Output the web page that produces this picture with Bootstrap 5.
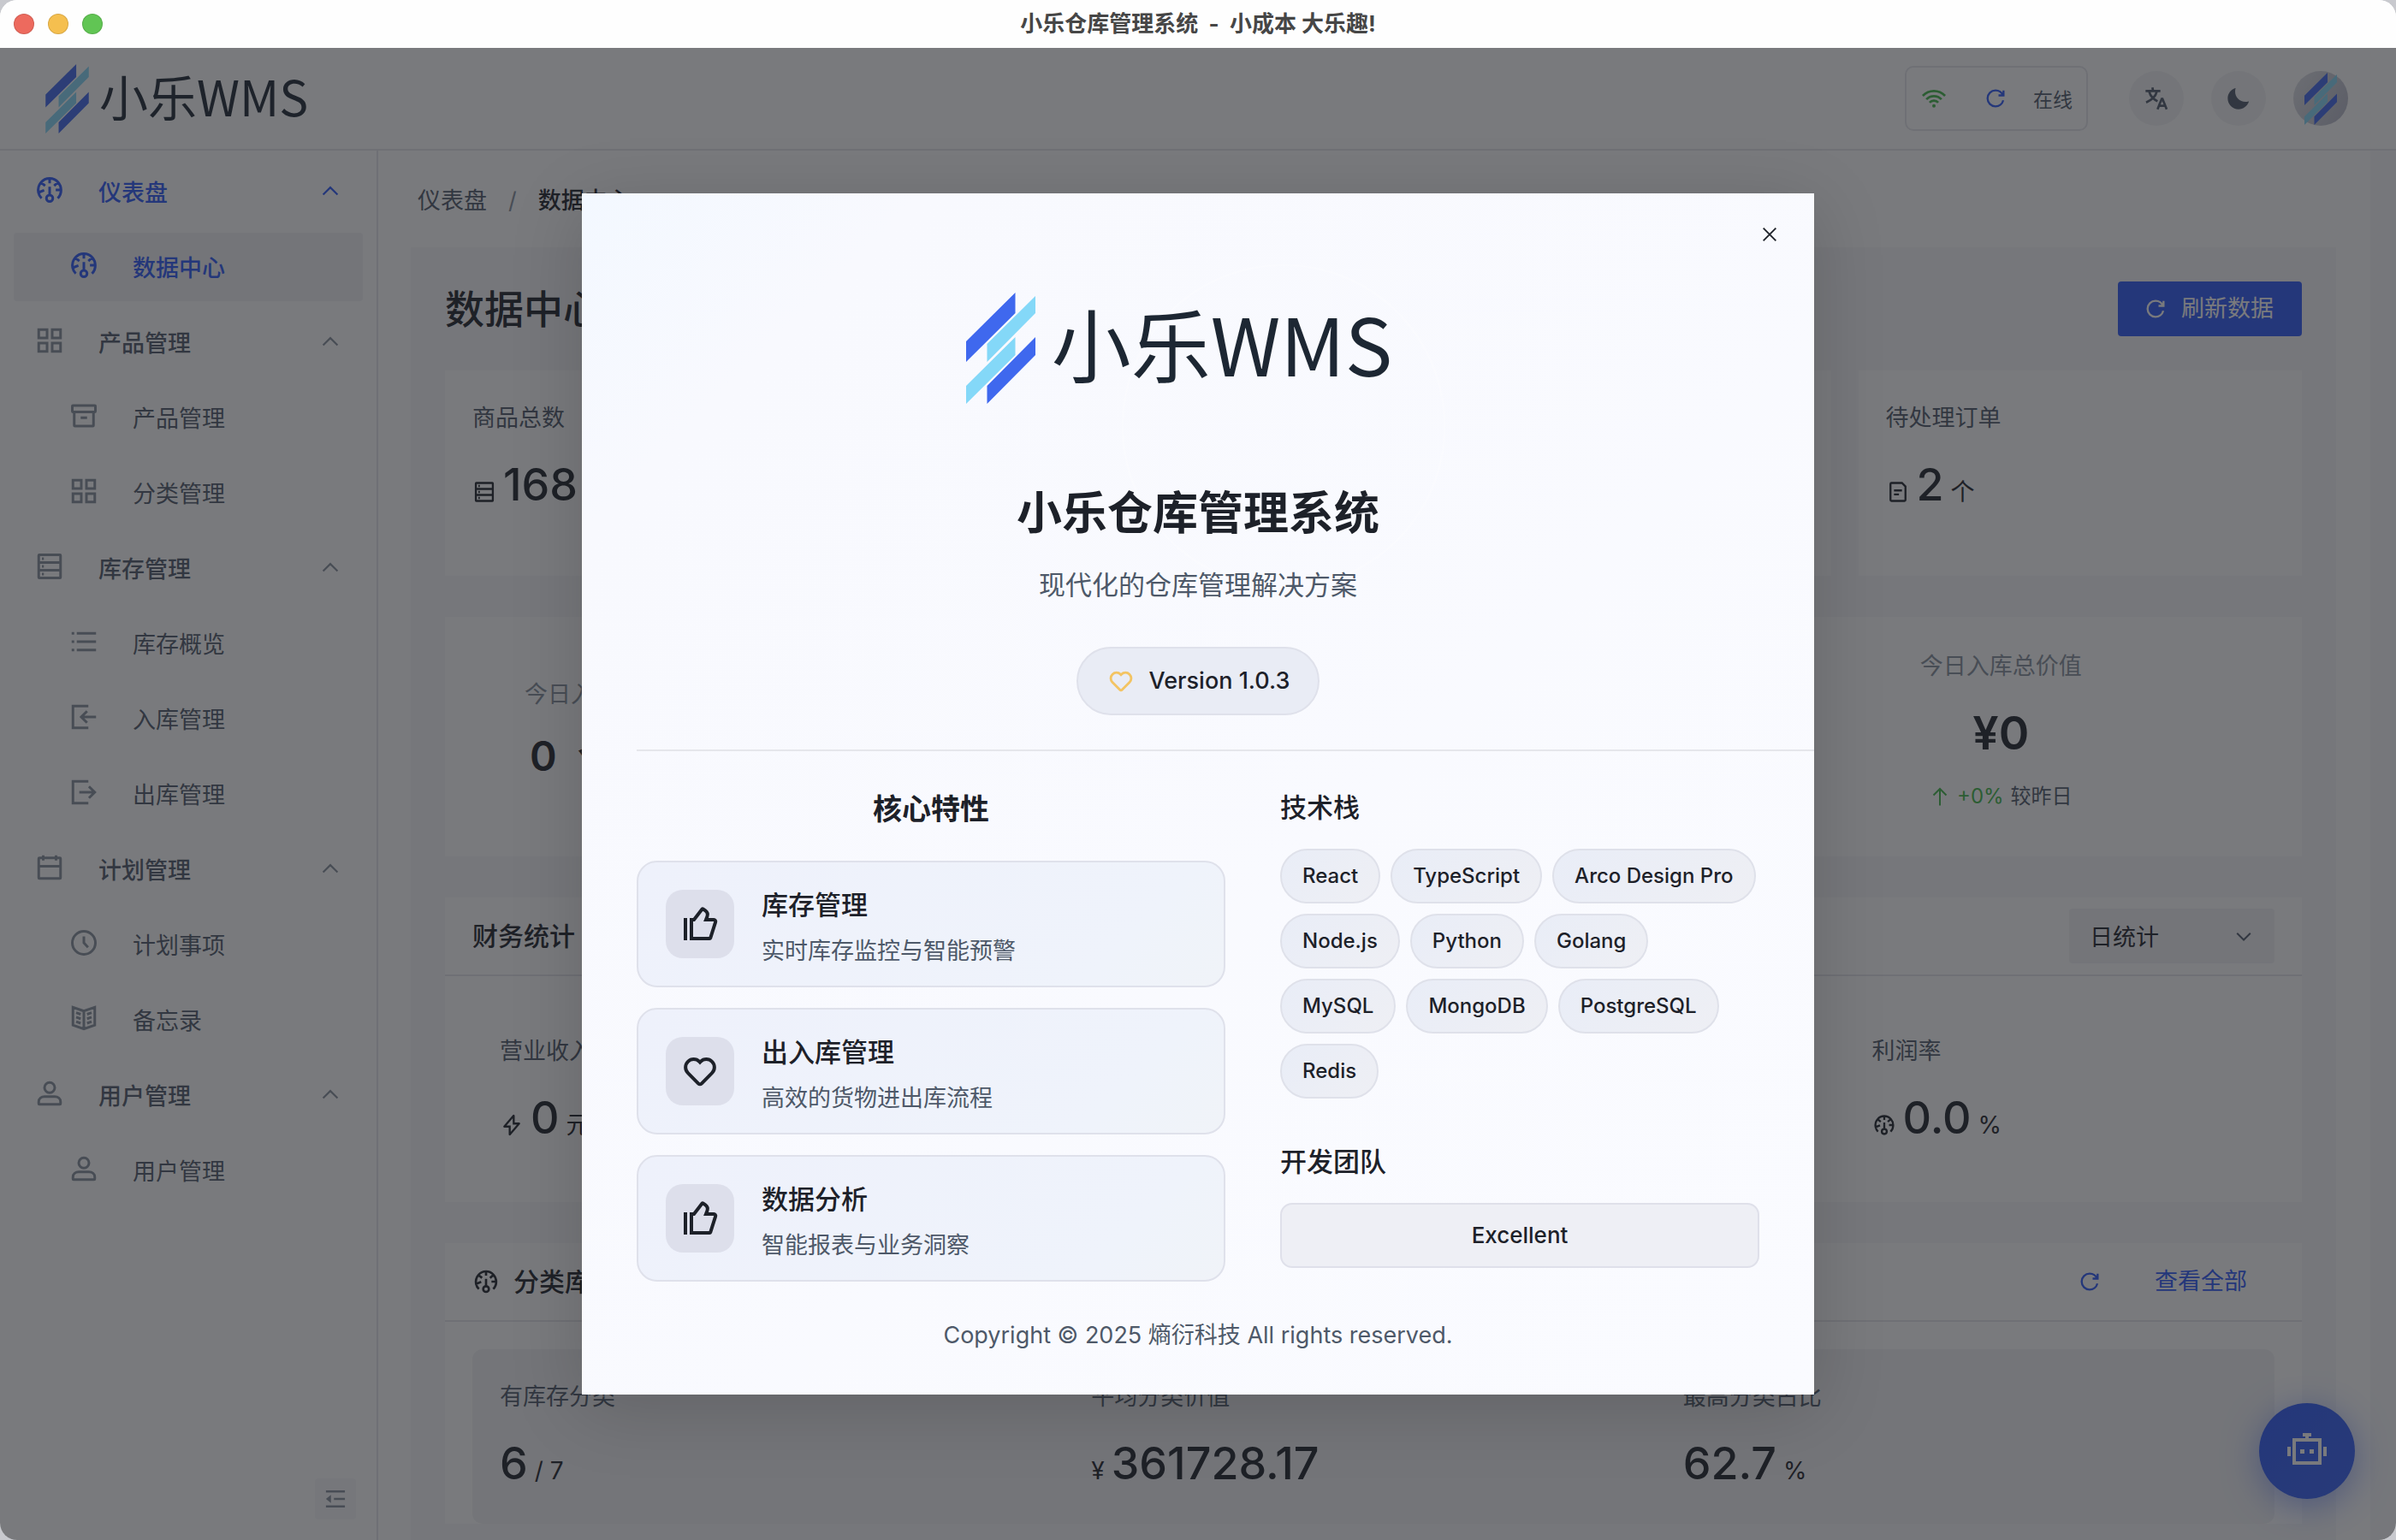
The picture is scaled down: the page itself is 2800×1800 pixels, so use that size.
<!DOCTYPE html>
<html lang="zh-CN">
<head>
<meta charset="utf-8">
<meta name="viewport" content="width=device-width, initial-scale=1">
<title>小乐仓库管理系统</title>
<link href="https://cdn.jsdelivr.net/npm/bootstrap@5.3.0/dist/css/bootstrap.min.css" rel="stylesheet">
<script src="https://cdn.jsdelivr.net/npm/bootstrap@5.3.0/dist/js/bootstrap.bundle.min.js"></script>
<style>
  :root {
    --ink: #1d2129; --ink-2: #4e5969; --ink-3: #86909c; --line: #e5e6eb;
    --fill: #f7f8fa; --fill-2: #f2f3f5; --brand: #2c58f8; --ok: #40b748;
  }
  html, body { height: 100%; }
  body { font-family: Inter, "Noto Sans CJK SC", sans-serif; font-size: 27px; line-height: 44px; color: var(--ink); background: #c8c9ce; overflow: hidden; }
  a { text-decoration: none; color: inherit; }
  .ic { width: 36px; height: 36px; flex: none; fill: none; stroke: currentColor; stroke-width: 4; }
  .ic-28 { width: 28px; height: 28px; }
  .ic-32 { width: 32px; height: 32px; }
  .ic-48 { width: 48px; height: 48px; }
  .fw-mid { font-weight: 500; }
  .app-window { height: 100vh; border-radius: 20px; overflow: hidden; background: #fff; }

  .titlebar { height: 56px; background: #fefefe; flex: none; }
  .titlebar h1 { font-size: 26px; line-height: 40px; font-weight: 700; color: #464646; white-space: pre; }
  .lights { left: 16px; gap: 16px; }
  .light { width: 24px; height: 24px; border-radius: 50%; border: 1px solid rgba(0,0,0,.12); }
  .light-close { background: #ed6a5e; }
  .light-min { background: #f5bf4f; }
  .light-max { background: #61c554; }

  .topbar { height: 120px; flex: none; border-bottom: 2px solid var(--line); padding: 0 56px 0 53px; }
  .top-tools { gap: 32px; }
  .brand-text { font-family: "Noto Sans CJK SC", sans-serif; font-size: 57px; line-height: 80px; color: #1d2733; margin-left: 12px; padding-bottom: 8px; }
  .online-box { height: 76px; border: 2px solid var(--line); border-radius: 10px; padding: 0 16px; gap: 30px; font-size: 23px; color: var(--ink-2); margin-right: 16px; }
  .online-box .plain-btn { padding-left: 12px; }
  .online-box span { padding-top: 4px; }
  .plain-btn { border: 0; background: none; padding: 0; color: inherit; display: inline-flex; align-items: center; justify-content: center; }
  .round-btn { width: 64px; height: 64px; border-radius: 50%; background: var(--fill-2); color: var(--ink-2); }
  .avatar-btn { background: linear-gradient(120deg, #dfe1e6, #b4b6c6); }
  .text-brand { color: var(--brand); }
  .text-ok { color: var(--ok); }

  .side { width: 442px; flex: none; border-right: 2px solid var(--line); padding: 8px 16px 24px; }
  .side a { height: 80px; padding: 4px 25px 0 24px; gap: 39px; border-radius: 4px; color: var(--ink-2); }
  .side a.sub-link { padding-left: 64px; }
  .side a .ic { color: var(--ink-3); margin-bottom: 8px; }
  .side a .ic-28 { width: 26px; height: 26px; margin-bottom: 4px; }
  .side a.on, .side a.on .ic { color: var(--brand); }
  .side a.here { background: var(--fill-2); }
  .side ul { gap: 8px; }
  .fold-btn { width: 48px; height: 48px; border-radius: 4px; background: var(--fill); color: var(--ink-3); margin-right: 8px; }

  .work { padding: 0 40px 0 38px; }
  .track { width: 30px; flex: none; background: var(--fill); }
  .crumbs { height: 113px; color: var(--ink-2); gap: 25px; padding: 4px 0 0 8px; flex: none; }
  .crumbs .sep { color: var(--ink-3); }
  .crumbs .current { color: var(--ink); }
  .panel { background: var(--fill); padding: 40px; }
  .panel h2 { font-size: 46px; line-height: 64px; font-weight: 500; }
  .main-btn { background: var(--brand); color: #fff; height: 64px; padding: 0 32px 0 29px; gap: 16px; font-size: 27px; border-radius: 4px; }
  .main-btn:hover { background: var(--brand); color: #fff; }
  .main-btn .ic { width: 28px; height: 28px; }
  .box { background: #fff; }
  .tiles { --bs-gutter-x: 32px; }
  .tiles-top { margin-top: 40px; }
  .tile { padding: 34px 32px 32px; height: 240px; }
  .stat-label { color: var(--ink-2); }
  .stat-row { height: 60px; margin-top: 26px; gap: 8px; font-size: 28px; line-height: 60px; }
  .stat-num { font-size: 52px; font-weight: 500; }
  .stat-row .ic { width: 28px; height: 28px; align-self: flex-end; margin-bottom: 8px; }
  .today { height: 280px; margin-top: 48px; padding-bottom: 16px; }
  .today-col { gap: 24px; padding-left: 20px; }
  .today-label { color: var(--ink-3); }
  .today-num { font-size: 54px; line-height: 64px; font-weight: 600; }
  .today-left { padding-left: 93px; gap: 18px; }
  .today-left .today-num { font-size: 48px; padding-left: 6px; gap: 24px; }
  .trend { font-size: 24px; line-height: 36px; color: var(--ink-2); }
  .trend .ic { width: 24px; height: 24px; }
  .box-head { height: 92px; border-bottom: 2px solid var(--line); padding: 0 32px; }
  .box-head h3 { font-size: 30px; line-height: 44px; font-weight: 500; }
  .head-tools { gap: 62px; padding-right: 32px; }
  .period { width: 240px; height: 64px; border: 0; border-radius: 4px; background: var(--fill-2); appearance: none; padding: 3px 24px 0; color: var(--ink); }
  .period-arrow { right: 24px; top: 20px; width: 24px; height: 24px; color: var(--ink-2); }
  .money { margin-top: 48px; }
  .money-body { padding: 66px 32px 68px 64px; }
  .kinds { margin-top: 48px; }
  .kinds-sum { margin: 32px; padding: 34px 32px 40px; background: var(--fill-2); border-radius: 12px; }

  .bot-btn { right: 48px; bottom: 48px; width: 112px; height: 112px; border-radius: 50%; background: linear-gradient(135deg, #2c58f8, #3560f3); color: #fff; box-shadow: 0 8px 40px rgba(44,88,248,.5); }
  .mask { inset: 0; background: rgba(31,33,38,.6); }

  .about { width: 1440px; padding: 116px 0 49px 64px; background: radial-gradient(circle 190px at 820px 272px, rgba(255,255,255,0) 98%, rgba(255,255,255,.3) 99%, transparent 100%), linear-gradient(135deg, #f3f8ff 0%, #f8f9fe 14%, #fafbff 100%); box-shadow: 0 16px 80px rgba(0,0,0,.16); }
  .about-close { top: 32px; right: 36px; width: 32px; height: 32px; }
  .about-close .ic { width: 22px; height: 22px; }
  .about-top { padding-right: 64px; }
  .about-logo { height: 130px; padding-right: 44px; }
  .about-logo .brand-text { font-size: 93px; line-height: 130px; margin-left: 19px; padding-bottom: 14px; }
  .about h2 { font-size: 53px; line-height: 72px; font-weight: 700; margin: 92px 0 24px; }
  .about-sub { font-size: 31px; line-height: 48px; color: var(--ink-2); margin: 0; }
  .version { height: 80px; border-radius: 40px; border: 2px solid #dfe1eb; background: #e9ecf5; padding: 0 33px; gap: 16px; margin: 48px 0 40px; }
  .version .ic { width: 34px; height: 34px; color: #f3c463; }
  .about-line { border-top: 2px solid #e5e6eb; }
  .about-cols { display: grid; grid-template-columns: 43fr 35fr; gap: 64px; padding: 42px 64px 0 0; }
  .about h3 { font-size: 31px; line-height: 48px; font-weight: 500; margin: 0 0 24px; }
  .about h3.feat-head { font-size: 34px; margin: 2px 0 36px; font-weight: 600; }
  .feats { gap: 24px; }
  .feat { height: 148px; border: 2px solid #dfe1eb; border-radius: 24px; background: linear-gradient(135deg, #eef1fb, #eff3fb 80%, #f0f3f8); padding: 0 32px; gap: 32px; }
  .feat-icon { width: 80px; height: 80px; border-radius: 20px; background: #dddfeb; flex: none; }
  .feat-text { padding-top: 7px; }
  .feat h4 { font-size: 31px; line-height: 48px; font-weight: 500; margin: 0 0 8px; }
  .feat p { color: var(--ink-2); margin: 0; }
  .tags { gap: 12px; }
  .tag { height: 64px; line-height: 60px; border: 2px solid #dfe1ea; border-radius: 32px; padding: 0 24px; font-size: 24px; font-weight: 500; background: linear-gradient(135deg, #e9edf7, #eeeff4); }
  .about h3.team-head { margin-top: 50px; }
  .team { height: 76px; line-height: 72px; border: 2px solid #dfe0ea; border-radius: 14px; background: #eeeff5; font-size: 26px; font-weight: 500; }
  .copy { line-height: 40px; margin: 43px 64px 0 0; color: var(--ink-2); }
</style>
</head>
<body>
<svg width="0" height="0" class="position-absolute" aria-hidden="true">
  <symbol id="i-dash" viewBox="0 0 48 48"><path d="M41.808 24c.118 4.63-1.486 9.333-5.21 13m5.21-13h-8.309m8.309 0c-.112-4.38-1.767-8.694-4.627-12M24 6c5.531 0 10.07 2.404 13.18 6M24 6c-5.724 0-10.384 2.574-13.5 6.38M24 6v7.5M37.18 12 31 17.5m-20.5-5.12L17 17.5m-6.5-5.12C6.99 16.662 5.44 22.508 6.53 28m4.872 9c-2.65-2.609-4.226-5.742-4.873-9m0 0 8.97-3.5"/><path d="M24 32a5 5 0 1 0 0 10 5 5 0 0 0 0-10Zm0 0V19"/></symbol>
  <symbol id="i-apps" viewBox="0 0 48 48"><path d="M7 7h13v13H7zM28 7h13v13H28zM7 28h13v13H7zM28 28h13v13H28z"/></symbol>
  <symbol id="i-archive" viewBox="0 0 48 48"><rect x="9" y="18" width="30" height="22" rx="1"/><path d="M6 9a1 1 0 0 1 1-1h34a1 1 0 0 1 1 1v8a1 1 0 0 1-1 1H7a1 1 0 0 1-1-1V9ZM19 27h10"/></symbol>
  <symbol id="i-storage" viewBox="0 0 48 48"><path d="M7 18h34v12H7V18ZM40 6H8a1 1 0 0 0-1 1v11h34V7a1 1 0 0 0-1-1ZM7 30h34v11a1 1 0 0 1-1 1H8a1 1 0 0 1-1-1V30Z"/><path d="M12 12h3M12 24h3M12 36h3"/></symbol>
  <symbol id="i-list" viewBox="0 0 48 48"><path d="M13 24h30M13 11h30M5 11h4M5 24h4M5 37h4m4 0h30"/></symbol>
  <symbol id="i-in" viewBox="0 0 48 48"><path d="m29 33.072-9.071-9.07L29 14.93M43 24H20.500M31 41H7V7h24"/></symbol>
  <symbol id="i-out" viewBox="0 0 48 48"><path d="m31.928 33.072 9.071-9.07-9.071-9.072M16.858 24h24M31 41H7V7h24"/></symbol>
  <symbol id="i-cal" viewBox="0 0 48 48"><path d="M7 22h34M14 5v8m20-8v8M8 41h32a1 1 0 0 0 1-1V10a1 1 0 0 0-1-1H8a1 1 0 0 0-1 1v30a1 1 0 0 0 1 1Z"/></symbol>
  <symbol id="i-clock" viewBox="0 0 48 48"><circle cx="24" cy="24" r="18"/><path d="M24 14v10l6.500 7"/></symbol>
  <symbol id="i-book" viewBox="0 0 48 48"><path d="M24 13 7 7v28l17 6 17-6V7l-17 6Zm0 0v27.500M29 18l7-2.500M29 25l7-2.500M29 32l7-2.500M19 18l-7-2.500m7 9.500-7-2.500m7 9.500-7-2.500"/></symbol>
  <symbol id="i-user" viewBox="0 0 48 48"><circle cx="24" cy="15" r="8"/><path d="M7 37c0-4.970 4.030-8 9-8h16c4.970 0 9 3.030 9 8v3a1 1 0 0 1-1 1H8a1 1 0 0 1-1-1v-3Z"/></symbol>
  <symbol id="i-up" viewBox="0 0 48 48"><path d="M39.600 30.557 24.043 15 8.487 30.557"/></symbol>
  <symbol id="i-down" viewBox="0 0 48 48"><path d="M39.600 17.443 24.043 33 8.487 17.443"/></symbol>
  <symbol id="i-refresh" viewBox="0 0 48 48"><path d="M38.837 18C36.463 12.136 30.715 8 24 8 15.163 8 8 15.163 8 24s7.163 16 16 16c7.455 0 13.720-5.100 15.496-12M40 8v10H30"/></symbol>
  <symbol id="i-wifi" viewBox="0 0 48 48"><path d="M31.587 31.485A9.978 9.978 0 0 0 24 28a9.977 9.977 0 0 0-7.586 3.485M37.255 25.822A17.953 17.953 0 0 0 24 20a17.953 17.953 0 0 0-13.256 5.822M43.618 19.449C38.696 14.246 31.728 11 24 11c-7.727 0-14.696 3.246-19.617 8.449"/><circle cx="24" cy="37" r="3" fill="currentColor" stroke="none"/></symbol>
  <symbol id="i-lang" viewBox="0 0 48 48"><path d="m42 43-2.385-6M26 43l2.384-6m11.231 0-.795-2-4.180-10h-1.280l-4.181 10-.795 2m11.231 0h-11.230M17 5l1 5M5 11h26M11 11s1.889 7.826 6.611 12.174C20.500 26 26 29 26 29M25 11s-1.889 7.826-6.611 12.174C13.667 27.522 6 31 6 31"/></symbol>
  <symbol id="i-moon" viewBox="0 0 48 48"><path fill="currentColor" stroke="none" d="M42.108 29.769c.124-.387-.258-.736-.645-.613A17.990 17.990 0 0 1 36 30c-9.941 0-18-8.059-18-18 0-1.904.296-3.740.844-5.463.123-.387-.226-.768-.613-.645C10.558 8.334 5 15.518 5 24c0 10.493 8.507 19 19 19 8.482 0 15.666-5.558 18.108-13.231Z"/></symbol>
  <symbol id="i-thumb" viewBox="0 0 48 48"><path d="M7 17v26m35.170-21.394-5.948 18.697a1 1 0 0 1-.953.697H14V19h3l9.403-12.223a1 1 0 0 1 1.386-.196l2.535 1.870a6 6 0 0 1 2.044 6.974L31 19h9.265a2 2 0 0 1 1.906 2.606Z"/></symbol>
  <symbol id="i-heart" viewBox="0 0 48 48"><path d="M38.083 12.912a9.310 9.310 0 0 1 0 13.246L25.760 38.640a2.480 2.480 0 0 1-3.520 0L9.917 26.158a9.310 9.310 0 0 1 0-13.246 9.330 9.330 0 0 1 13.401 0l.682.688.682-.688a9.330 9.330 0 0 1 13.401 0Z"/></symbol>
  <symbol id="i-file" viewBox="0 0 48 48"><path d="M16 21h16m-16 8h10m11 13H11a2 2 0 0 1-2-2V8a2 2 0 0 1 2-2h21l7 7v27a2 2 0 0 1-2 2Z"/></symbol>
  <symbol id="i-bolt" viewBox="0 0 48 48"><path d="M27.824 5.203A.1.1 0 0 1 28 5.270V21h10.782a.1.1 0 0 1 .075.165L20.176 42.797A.1.1 0 0 1 20 42.730V27H9.219a.1.1 0 0 1-.076-.165L27.824 5.203Z"/></symbol>
  <symbol id="i-fold" viewBox="0 0 48 48"><path d="M43 9H5M43 24H21M43 39H5"/><path fill="currentColor" stroke="none" d="M15 16v16L5 24z"/></symbol>
  <symbol id="i-rise" viewBox="0 0 48 48"><path d="M24 45V7M9 21 24 6l15 15"/></symbol>
  <symbol id="i-close" viewBox="0 0 48 48"><path d="M8 8l32 32M40 8 8 40"/></symbol>
  <symbol id="i-bot" viewBox="0 0 48 48"><rect x="9" y="11" width="30" height="27"/><path fill="currentColor" stroke="none" d="M19 3h10v4h-3v3h-4V7h-3zM1 19h4v11H1zM43 19h4v11h-4zM16 22h5v5h-5zM27 22h5v5h-5z"/></symbol>
  <symbol id="i-mark" viewBox="0 0 81 130"><path fill="#84d8f8" d="M81 4v20L24.500 81V60zM57.500 52v21L0 130v-21z"/><path fill="#3f68ee" d="M57.500 0v24L0 81V57zM81 52v21l-56.500 57v-21z"/></symbol>
</svg>

<div class="app-window d-flex flex-column">
  <div class="titlebar position-relative d-flex align-items-center justify-content-center">
    <div class="lights position-absolute d-flex">
      <span class="light light-close"></span><span class="light light-min"></span><span class="light light-max"></span>
    </div>
    <h1 class="m-0">小乐仓库管理系统  -  小成本 大乐趣!</h1>
  </div>

  <div class="position-relative flex-grow-1 d-flex flex-column overflow-hidden">
    <header class="topbar d-flex align-items-center">
      <a href="#" class="d-flex align-items-center">
        <svg width="51" height="81"><use href="#i-mark"/></svg>
        <span class="brand-text">小乐WMS</span>
      </a>
      <div class="top-tools ms-auto d-flex align-items-center">
        <div class="online-box d-flex align-items-center">
          <svg class="ic ic-32 text-ok"><use href="#i-wifi"/></svg>
          <button class="plain-btn text-brand" aria-label="刷新"><svg class="ic ic-28"><use href="#i-refresh"/></svg></button>
          <span>在线</span>
        </div>
        <button class="plain-btn round-btn" aria-label="语言"><svg class="ic ic-32"><use href="#i-lang"/></svg></button>
        <button class="plain-btn round-btn" aria-label="主题"><svg class="ic ic-32"><use href="#i-moon"/></svg></button>
        <button class="plain-btn round-btn avatar-btn" aria-label="用户"><svg width="38" height="61"><use href="#i-mark"/></svg></button>
      </div>
    </header>

    <div class="d-flex flex-grow-1 overflow-hidden">
      <nav class="side d-flex flex-column">
        <ul class="list-unstyled d-flex flex-column m-0">
          <li><a href="#" class="on fw-mid d-flex align-items-center"><svg class="ic"><use href="#i-dash"/></svg>仪表盘<svg class="ic ic-28 ms-auto"><use href="#i-up"/></svg></a></li>
          <li><a href="#" class="on here fw-mid sub-link d-flex align-items-center"><svg class="ic"><use href="#i-dash"/></svg>数据中心</a></li>
          <li><a href="#" class="fw-mid d-flex align-items-center"><svg class="ic"><use href="#i-apps"/></svg>产品管理<svg class="ic ic-28 ms-auto"><use href="#i-up"/></svg></a></li>
          <li><a href="#" class="sub-link d-flex align-items-center"><svg class="ic"><use href="#i-archive"/></svg>产品管理</a></li>
          <li><a href="#" class="sub-link d-flex align-items-center"><svg class="ic"><use href="#i-apps"/></svg>分类管理</a></li>
          <li><a href="#" class="fw-mid d-flex align-items-center"><svg class="ic"><use href="#i-storage"/></svg>库存管理<svg class="ic ic-28 ms-auto"><use href="#i-up"/></svg></a></li>
          <li><a href="#" class="sub-link d-flex align-items-center"><svg class="ic"><use href="#i-list"/></svg>库存概览</a></li>
          <li><a href="#" class="sub-link d-flex align-items-center"><svg class="ic"><use href="#i-in"/></svg>入库管理</a></li>
          <li><a href="#" class="sub-link d-flex align-items-center"><svg class="ic"><use href="#i-out"/></svg>出库管理</a></li>
          <li><a href="#" class="fw-mid d-flex align-items-center"><svg class="ic"><use href="#i-cal"/></svg>计划管理<svg class="ic ic-28 ms-auto"><use href="#i-up"/></svg></a></li>
          <li><a href="#" class="sub-link d-flex align-items-center"><svg class="ic"><use href="#i-clock"/></svg>计划事项</a></li>
          <li><a href="#" class="sub-link d-flex align-items-center"><svg class="ic"><use href="#i-book"/></svg>备忘录</a></li>
          <li><a href="#" class="fw-mid d-flex align-items-center"><svg class="ic"><use href="#i-user"/></svg>用户管理<svg class="ic ic-28 ms-auto"><use href="#i-up"/></svg></a></li>
          <li><a href="#" class="sub-link d-flex align-items-center"><svg class="ic"><use href="#i-user"/></svg>用户管理</a></li>
        </ul>
        <button class="plain-btn fold-btn mt-auto ms-auto" aria-label="收起菜单"><svg class="ic ic-28"><use href="#i-fold"/></svg></button>
      </nav>

      <main class="work flex-grow-1 d-flex flex-column">
        <div class="crumbs d-flex align-items-center">
          <a href="#">仪表盘</a><span class="sep">/</span><span class="fw-mid current">数据中心</span>
        </div>
        <div class="panel flex-grow-1">
          <div class="d-flex justify-content-between align-items-center">
            <h2 class="m-0">数据中心</h2>
            <button class="btn main-btn d-flex align-items-center"><svg class="ic"><use href="#i-refresh"/></svg>刷新数据</button>
          </div>

          <div class="row tiles tiles-top">
            <div class="col-3"><div class="box tile">
              <div class="stat-label">商品总数</div>
              <div class="stat-row d-flex align-items-baseline"><svg class="ic"><use href="#i-storage"/></svg><span class="stat-num">168</span></div>
            </div></div>
            <div class="col-3"><div class="box tile"></div></div>
            <div class="col-3"><div class="box tile"></div></div>
            <div class="col-3"><div class="box tile">
              <div class="stat-label">待处理订单</div>
              <div class="stat-row d-flex align-items-baseline"><svg class="ic"><use href="#i-file"/></svg><span class="stat-num">2</span><span>个</span></div>
            </div></div>
          </div>

          <section class="box today">
            <div class="row tiles h-100 align-items-center m-0">
              <div class="col-2 p-0"><div class="today-left d-flex flex-column">
                <div class="today-label">今日入库</div>
                <div class="today-num d-flex"><span>0</span><span>个</span></div>
              </div></div>
              <div class="col-6"></div>
              <div class="col-4"><div class="today-col d-flex flex-column align-items-center">
                <div class="today-label">今日入库总价值</div>
                <div class="today-num">¥0</div>
                <div class="trend d-flex align-items-center gap-2"><span class="text-ok d-flex align-items-center gap-2"><svg class="ic"><use href="#i-rise"/></svg>+0%</span>较昨日</div>
              </div></div>
            </div>
          </section>

          <section class="box money">
            <div class="box-head d-flex align-items-center justify-content-between">
              <h3 class="m-0">财务统计</h3>
              <div class="position-relative">
                <select class="period d-block" aria-label="统计周期"><option>日统计</option></select>
                <svg class="ic period-arrow position-absolute"><use href="#i-down"/></svg>
              </div>
            </div>
            <div class="money-body">
              <div class="row tiles">
                <div class="col-3">
                  <div class="stat-label">营业收入</div>
                  <div class="stat-row d-flex align-items-baseline"><svg class="ic"><use href="#i-bolt"/></svg><span class="stat-num">0</span><span>元</span></div>
                </div>
                <div class="col-3 offset-6"><div class="ps-4">
                  <div class="stat-label">利润率</div>
                  <div class="stat-row d-flex align-items-baseline"><svg class="ic"><use href="#i-dash"/></svg><span class="stat-num">0.0</span><span>%</span></div>
                </div></div>
              </div>
            </div>
          </section>

          <section class="box kinds">
            <div class="box-head d-flex align-items-center justify-content-between">
              <h3 class="m-0 d-flex align-items-center gap-3"><svg class="ic ic-32"><use href="#i-dash"/></svg>分类库存统计</h3>
              <div class="head-tools d-flex align-items-center text-brand">
                <button class="plain-btn" aria-label="刷新"><svg class="ic ic-28"><use href="#i-refresh"/></svg></button>
                <a href="#">查看全部</a>
              </div>
            </div>
            <div class="kinds-sum">
              <div class="row tiles">
                <div class="col-4"><div class="stat-label">有库存分类</div><div class="stat-row d-flex align-items-baseline"><span class="stat-num">6</span><span>/ 7</span></div></div>
                <div class="col-4"><div class="stat-label">平均分类价值</div><div class="stat-row d-flex align-items-baseline"><span>¥</span><span class="stat-num">361728.17</span></div></div>
                <div class="col-4"><div class="stat-label">最高分类占比</div><div class="stat-row d-flex align-items-baseline"><span class="stat-num">62.7</span><span>%</span></div></div>
              </div>
            </div>
          </section>
        </div>
      </main>
      <div class="track"></div>
    </div>

    <button class="plain-btn bot-btn position-absolute" aria-label="助手"><svg class="ic ic-48"><use href="#i-bot"/></svg></button>

    <div class="mask position-absolute d-flex align-items-center justify-content-center">
      <div class="about position-relative" role="dialog" aria-labelledby="about-name">
        <button class="plain-btn about-close position-absolute" aria-label="关闭"><svg class="ic"><use href="#i-close"/></svg></button>
        <div class="about-top d-flex flex-column align-items-center">
          <div class="about-logo d-flex align-items-center">
            <svg width="81" height="130"><use href="#i-mark"/></svg>
            <span class="brand-text">小乐WMS</span>
          </div>
          <h2 id="about-name">小乐仓库管理系统</h2>
          <p class="about-sub">现代化的仓库管理解决方案</p>
          <div class="version fw-mid d-flex align-items-center"><svg class="ic"><use href="#i-heart"/></svg>Version 1.0.3</div>
        </div>
        <div class="about-line"></div>
        <div class="about-cols">
          <div>
            <h3 class="feat-head text-center">核心特性</h3>
            <div class="feats d-flex flex-column">
              <div class="feat d-flex align-items-center">
                <div class="feat-icon d-flex align-items-center justify-content-center"><svg class="ic ic-48"><use href="#i-thumb"/></svg></div>
                <div class="feat-text"><h4>库存管理</h4><p>实时库存监控与智能预警</p></div>
              </div>
              <div class="feat d-flex align-items-center">
                <div class="feat-icon d-flex align-items-center justify-content-center"><svg class="ic ic-48"><use href="#i-heart"/></svg></div>
                <div class="feat-text"><h4>出入库管理</h4><p>高效的货物进出库流程</p></div>
              </div>
              <div class="feat d-flex align-items-center">
                <div class="feat-icon d-flex align-items-center justify-content-center"><svg class="ic ic-48"><use href="#i-thumb"/></svg></div>
                <div class="feat-text"><h4>数据分析</h4><p>智能报表与业务洞察</p></div>
              </div>
            </div>
          </div>
          <div>
            <h3>技术栈</h3>
            <div class="tags d-flex flex-wrap">
              <span class="tag">React</span><span class="tag">TypeScript</span><span class="tag">Arco Design Pro</span>
              <span class="tag">Node.js</span><span class="tag">Python</span><span class="tag">Golang</span>
              <span class="tag">MySQL</span><span class="tag">MongoDB</span><span class="tag">PostgreSQL</span>
              <span class="tag">Redis</span>
            </div>
            <h3 class="team-head">开发团队</h3>
            <div class="team text-center">Excellent</div>
          </div>
        </div>
        <p class="copy text-center">Copyright © 2025 熵衍科技 All rights reserved.</p>
      </div>
    </div>
  </div>
</div>
</body>
</html>
